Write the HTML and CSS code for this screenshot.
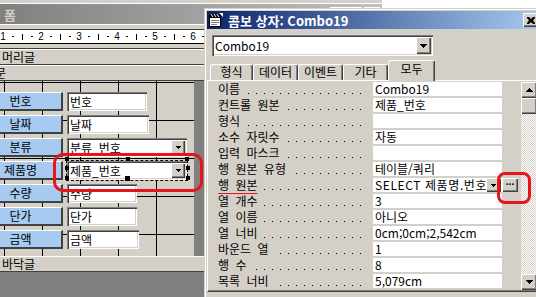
FILE: index.html
```html
<!DOCTYPE html>
<html lang="ko">
<head>
    <meta charset="UTF-8">
    <meta name="viewport" content="width=device-width, initial-scale=1.0">
    <title>콤보 상자 속성</title>
    <link rel="stylesheet" href="styles.css">
</head>
<body>
    <!-- 폼 디자인 창 -->
    <div class="form-win">
        <div class="form-edge"></div>
        <div class="form-title">
            <span>폼</span>
            <div class="title-btns"><i></i><i></i><i></i></div>
        </div>
        <div class="ruler-wrap">
            <div class="ruler">
                <div class="r-cell"><b>1</b><i class="rd"></i><i class="rt"></i><i class="rd"></i></div>
                <div class="r-cell"><b>2</b><i class="rd"></i><i class="rt"></i><i class="rd"></i></div>
                <div class="r-cell"><b>3</b><i class="rd"></i><i class="rt"></i><i class="rd"></i></div>
                <div class="r-cell"><b>4</b><i class="rd"></i><i class="rt"></i><i class="rd"></i></div>
                <div class="r-cell"><b>5</b><i class="rd"></i><i class="rt"></i><i class="rd"></i></div>
                <div class="r-cell"><b>6</b><i class="rd"></i><i class="rt"></i><i class="rd"></i></div>
                <div class="r-cell"><b>7</b><i class="rd"></i><i class="rt"></i><i class="rd"></i></div>
                <div class="r-cell"><b>8</b><i class="rd"></i><i class="rt"></i><i class="rd"></i></div>
                <div class="r-cell"><b>9</b><i class="rd"></i><i class="rt"></i><i class="rd"></i></div>
            </div>
        </div>
        <div class="band">머리글</div>
        <div class="band band-cut">본문</div>
        <div class="detail">
            <div class="design">
                <div class="ctl-row">
                    <span class="lbl">번호</span>
                    <span class="txt w80">번호</span>
                </div>
                <div class="ctl-row">
                    <span class="lbl">날짜</span>
                    <span class="txt w82">날짜</span>
                </div>
                <div class="ctl-row">
                    <span class="lbl">분류</span>
                    <span class="f-combo">
                        <span class="fc-text">분류_번호</span>
                        <span class="f-drop"><svg width="5" height="3" viewBox="0 0 5 3"><path d="M0 0h5v1h-1v1h-1v1h-1v-1h-1v-1h-1z"/></svg></span>
                    </span>
                </div>
                <div class="ctl-row">
                    <span class="lbl">제품명</span>
                    <span class="f-combo sel">
                        <span class="fc-text">제품_번호</span>
                        <span class="f-drop"><svg width="5" height="3" viewBox="0 0 5 3"><path d="M0 0h5v1h-1v1h-1v1h-1v-1h-1v-1h-1z"/></svg></span>
                        <i class="h h-tl"></i><i class="h h-tm"></i><i class="h h-tr"></i>
                        <i class="h h-ml"></i><i class="h h-mr"></i>
                        <i class="h h-bl"></i><i class="h h-bm"></i><i class="h h-br"></i>
                    </span>
                </div>
                <div class="ctl-row">
                    <span class="lbl">수량</span>
                    <span class="txt w70">수량</span>
                </div>
                <div class="ctl-row">
                    <span class="lbl">단가</span>
                    <span class="txt w70">단가</span>
                </div>
                <div class="ctl-row">
                    <span class="lbl">금액</span>
                    <span class="txt w72">금액</span>
                </div>
            </div>
            <div class="detail-out"></div>
        </div>
        <div class="band">바닥글</div>
        <div class="form-rest"></div>
    </div>

    <!-- 속성 시트 -->
    <div class="dlg">
        <div class="dlg-title">
            <svg class="dlg-icon" width="16" height="16" viewBox="0 0 16 16">
                <rect x="1.5" y="5.5" width="11" height="9" fill="#fff" stroke="#000"/>
                <path d="M3 8.5h8M3 10.5h8M3 12.5h6" stroke="#808080"/>
                <path d="M1 2h12v3H1z" fill="#000"/>
                <path d="M3 2l2 3M6 2l2 3M9 2l2 3" stroke="#fff"/>
                <path d="M11 1h4v4z" fill="#fff"/>
            </svg>
            <span>콤보 상자: Combo19</span>
            <span class="x-btn"><svg width="8" height="7" viewBox="0 0 8 7"><path d="M0 0h2l2 2 2-2h2v1l-2 2.5 2 2.5v1h-2l-2-2-2 2h-2v-1l2-2.5-2-2.5z"/></svg></span>
        </div>
        <div class="dlg-combo">
            <span class="dc-text">Combo19</span>
            <span class="drop-btn"><svg width="7" height="4" viewBox="0 0 7 4"><path d="M0 0h7v1h-1v1h-1v1h-1v1h-1v-1h-1v-1h-1v-1h-1z"/></svg></span>
        </div>
        <div class="tabs">
            <span class="tab tab-first">형식</span>
            <span class="tab">데이터</span>
            <span class="tab">이벤트</span>
            <span class="tab">기타</span>
            <span class="tab active">모두</span>
        </div>
        <div class="panel">
            <div class="props">
                <div class="pl"><span>이름</span></div><div class="pv">Combo19</div>
                <div class="pl"><span>컨트롤 원본</span></div><div class="pv">제품_번호</div>
                <div class="pl"><span>형식</span></div><div class="pv"></div>
                <div class="pl"><span>소수 자릿수</span></div><div class="pv">자동</div>
                <div class="pl"><span>입력 마스크</span></div><div class="pv"></div>
                <div class="pl"><span>행 원본 유형</span></div><div class="pv">테이블/쿼리</div>
                <div class="pl"><span class="mark">행 원본</span></div>
                <div class="pv pv-drop">
                    <span>SELECT 제품명.번호</span>
                    <i class="mini-drop"><svg width="5" height="3" viewBox="0 0 5 3"><path d="M0 0h5v1h-1v1h-1v1h-1v-1h-1v-1h-1z"/></svg></i>
                </div>
                <div class="pb">...</div>
                <div class="pl"><span>열 개수</span></div><div class="pv">3</div>
                <div class="pl"><span>열 이름</span></div><div class="pv">아니오</div>
                <div class="pl"><span>열 너비</span></div><div class="pv">0cm;0cm;2,542cm</div>
                <div class="pl"><span>바운드 열</span></div><div class="pv">1</div>
                <div class="pl"><span>행 수</span></div><div class="pv">8</div>
                <div class="pl"><span>목록 너비</span></div><div class="pv">5,079cm</div>
            </div>
            <div class="vscroll">
                <span class="sb-btn"><svg width="7" height="4" viewBox="0 0 7 4"><path d="M3 0h1v1h1v1h1v1h1v1h-7v-1h1v-1h1v-1h1z"/></svg></span>
                <span class="sb-thumb"></span>
                <span class="sb-track"></span>
                <span class="sb-btn"><svg width="7" height="4" viewBox="0 0 7 4"><path d="M0 0h7v1h-1v1h-1v1h-1v1h-1v-1h-1v-1h-1v-1h-1z"/></svg></span>
            </div>
        </div>
    </div>
</body>
</html>
```

FILE: styles.css
```css
* {
    margin: 0;
    padding: 0;
    box-sizing: border-box;
}
body {
    width: 536px;
    height: 297px;
    overflow: hidden;
    position: relative;
    background: #fff;
    font-family: "Noto Sans CJK KR", "Liberation Sans", sans-serif;
    font-size: 12px;
    color: #000;
}
i, b {
    display: block;
    font-style: normal;
}

/* 폼 디자인 창 */
.form-win {
    width: 382px;
    height: 297px;
    background: #d4d0c8;
    display: flex;
    flex-direction: column;
}
.form-edge {
    height: 4px;
    border-bottom: 1px solid #fff;
}
.form-title {
    height: 20px;
    display: flex;
    align-items: center;
    padding: 0 2px 0 4px;
    background: linear-gradient(to right, #808080, #c0c0c0);
    color: #d4d0c8;
    font-size: 13px;
    font-weight: bold;
}
.title-btns {
    margin-left: auto;
    display: flex;
    gap: 2px;
}
.title-btns i {
    width: 16px;
    height: 14px;
    background: #d4d0c8;
    box-shadow: inset 1px 1px #fff, inset -1px -1px #404040;
}
.title-btns i:first-child {
    margin-right: -2px;
}
.ruler-wrap {
    border-top: 1px solid #fff;
    border-bottom: 1px solid #404040;
    padding: 4px 0;
}
.ruler {
    height: 15px;
    display: flex;
    background: #fff;
    border-top: 1px solid #404040;
    border-bottom: 1px solid #000;
    overflow: hidden;
}
.r-cell {
    flex: none;
    width: 38px;
    display: grid;
    grid-template-columns: 10px 9px 10px 9px;
    align-items: center;
    justify-items: center;
    font-family: "Liberation Sans", sans-serif;
    font-size: 10px;
    line-height: 13px;
}
.r-cell:first-child {
    margin-left: -2px;
}
.r-cell b {
    font-weight: normal;
}
.rd {
    width: 2px;
    height: 1px;
    background: #000;
}
.rt {
    width: 1px;
    height: 6px;
    background: #000;
}
.band {
    height: 16px;
    line-height: 14px;
    padding-left: 2px;
    border-top: 1px solid #fff;
    border-bottom: 1px solid #404040;
    white-space: nowrap;
    overflow: hidden;
}
.band-cut {
    padding-left: 0;
    text-indent: -16px;
}
.detail {
    height: 175px;
    display: flex;
}
.design {
    width: 194px;
    flex: none;
    padding-top: 11px;
    display: flex;
    flex-direction: column;
    gap: 4px;
    background-color: #d4d0c8;
    background-image:
        linear-gradient(to right, #000 1px, transparent 1px),
        linear-gradient(#000 1px, transparent 1px);
    background-size: 38px 38px;
    background-position: 4px 0, 0 1px;
}
.detail-out {
    flex: 1;
    background: #808080;
}
.form-rest {
    flex: 1;
    background: #808080;
}

/* 컨트롤 */
.ctl-row {
    height: 19px;
    display: flex;
    gap: 4px;
}
.lbl {
    width: 63px;
    height: 19px;
    padding-right: 20px;
    text-align: center;
    line-height: 16px;
    background: #a6caf0;
    border-top: 1px solid #fff;
    border-right: 2px solid #404040;
    border-bottom: 2px solid #404040;
}
.txt {
    height: 19px;
    padding-left: 3px;
    line-height: 19px;
    background: #fff;
    box-shadow: inset 1px 1px #808080, inset 2px 2px #404040, inset -1px -1px #fff, inset -2px -2px #d4d0c8;
}
.w70 { width: 70px; }
.w72 { width: 72px; }
.w80 { width: 80px; }
.w82 { width: 82px; }
.f-combo {
    width: 120px;
    height: 19px;
    padding: 2px;
    display: flex;
    background: #fff;
    box-shadow: inset 1px 1px #808080, inset 2px 2px #404040, inset -1px -1px #fff, inset -2px -2px #d4d0c8;
}
.fc-text {
    flex: 1;
    padding-left: 1px;
    line-height: 15px;
}
.f-drop {
    width: 14px;
    display: flex;
    align-items: center;
    justify-content: center;
    background: #d4d0c8;
    box-shadow: inset 1px 1px #fff, inset -1px -1px #404040, inset -2px -2px #808080;
}
.sel {
    position: relative;
    outline: 1px dashed #000;
}
.sel::after {
    content: "";
    position: absolute;
    left: -14px;
    top: -8px;
    width: 144px;
    height: 33px;
    border: 3px solid #e8141b;
    border-radius: 10px;
}
.h {
    position: absolute;
    width: 4px;
    height: 4px;
    background: #000;
}
.h-tl { left: -2px; top: -4px; }
.h-tm { left: 59px; top: -4px; }
.h-tr { left: 118px; top: -4px; }
.h-ml { left: -2px; top: 5px; }
.h-mr { left: 119px; top: 5px; }
.h-bl { left: -2px; top: 15px; }
.h-bm { left: 58px; top: 15px; width: 5px; height: 5px; }
.h-br { left: 119px; top: 15px; }

/* 속성 시트 */
.dlg {
    position: absolute;
    left: 204px;
    top: 8px;
    width: 340px;
    height: 300px;
    padding: 3px;
    background: #d4d0c8;
    box-shadow: inset 1px 1px #d4d0c8, inset 2px 2px #fff, inset -1px -1px #404040, inset -2px -2px #808080;
}
.dlg-title {
    height: 18px;
    display: flex;
    align-items: center;
    gap: 4px;
    padding-left: 1px;
    background: linear-gradient(to right, #0a246a, #a6caf0);
    color: #fff;
    font-size: 13px;
    font-weight: bold;
    white-space: nowrap;
}
.dlg-icon {
    flex: none;
}
.x-btn {
    margin-left: auto;
    margin-right: 2px;
    width: 16px;
    height: 14px;
    display: flex;
    align-items: center;
    justify-content: center;
    background: #d4d0c8;
    box-shadow: inset 1px 1px #fff, inset -1px -1px #404040, inset -2px -2px #808080;
}
.dlg-combo {
    width: 221px;
    height: 21px;
    margin: 6px 0 0 5px;
    padding: 2px;
    display: flex;
    background: #fff;
    box-shadow: inset 1px 1px #808080, inset 2px 2px #404040, inset -1px -1px #fff, inset -2px -2px #d4d0c8;
}
.dc-text {
    flex: 1;
    padding-left: 1px;
    line-height: 17px;
}
.drop-btn {
    width: 15px;
    display: flex;
    align-items: center;
    justify-content: center;
    background: #d4d0c8;
    box-shadow: inset 1px 1px #fff, inset -1px -1px #404040, inset -2px -2px #808080;
}
.tabs {
    height: 24px;
    padding-left: 3px;
    display: flex;
    align-items: flex-end;
    position: relative;
    z-index: 1;
}
.tab {
    width: 45px;
    height: 16px;
    text-align: center;
    line-height: 14px;
    border-top: 1px solid #fff;
    border-left: 1px solid #fff;
    border-right: 1px solid #404040;
    border-radius: 3px 3px 0 0;
    box-shadow: inset -1px 0 #808080;
    white-space: nowrap;
}
.tab-first {
    width: 43px;
}
.tab.active {
    width: 47px;
    height: 21px;
    margin-bottom: -1px;
    padding-top: 1px;
    background: #d4d0c8;
}
.panel {
    height: 212px;
    padding-top: 1px;
    display: flex;
    border-top: 1px solid #fff;
    border-left: 1px solid #fff;
    border-bottom: 1px solid #404040;
    box-shadow: inset 0 -1px #808080;
}
.props {
    width: 313px;
    display: grid;
    grid-template-columns: 165px 129px 19px;
    grid-auto-rows: 16px;
}
.pl {
    grid-column: 1;
    padding: 0 8px 0 10px;
    line-height: 14px;
    white-space: nowrap;
    overflow: hidden;
    word-spacing: 3px;
    background-image: linear-gradient(to right, #000 1px, transparent 1px);
    background-size: 8px 1px;
    background-repeat: repeat-x;
    background-position: 6px 11px;
    background-origin: content-box;
    background-clip: content-box;
}
.pl span {
    padding-right: 4px;
    background: #d4d0c8;
}
.mark {
    text-decoration: underline #e8141b 2px;
    text-underline-offset: 3px;
}
.pv {
    height: 14px;
    padding-left: 2px;
    line-height: 14px;
    background: #fff;
    white-space: nowrap;
    overflow: hidden;
}
.pv-drop {
    display: flex;
    padding-right: 1px;
}
.pv-drop span {
    flex: 1;
    overflow: hidden;
    letter-spacing: 0.6px;
}
.mini-drop {
    flex: none;
    width: 15px;
    height: 14px;
    display: flex;
    align-items: center;
    justify-content: center;
    background: #d4d0c8;
    box-shadow: inset 1px 1px #fff, inset -1px -1px #404040, inset -2px -2px #808080;
}
.pb {
    grid-column: 3;
    width: 16px;
    height: 14px;
    position: relative;
    text-align: center;
    font-family: "Liberation Sans", sans-serif;
    font-size: 10px;
    font-weight: bold;
    line-height: 8px;
    background: #d4d0c8;
    box-shadow: inset 1px 1px #fff, inset -1px -1px #404040, inset -2px -2px #808080;
}
.pb::after {
    content: "";
    position: absolute;
    left: -5px;
    top: -6px;
    width: 28px;
    height: 26px;
    border: 3px solid #e8141b;
    border-radius: 8px;
}
.vscroll {
    width: 16px;
    height: 208px;
    display: flex;
    flex-direction: column;
    background: repeating-conic-gradient(#d4d0c8 0 25%, #fff 0 50%) 0 0 / 2px 2px;
}
.sb-btn, .sb-thumb {
    flex: none;
    height: 16px;
    display: flex;
    align-items: center;
    justify-content: center;
    background: #d4d0c8;
    box-shadow: inset 1px 1px #fff, inset -1px -1px #404040, inset -2px -2px #808080;
}
.sb-track {
    flex: 1;
}
```
